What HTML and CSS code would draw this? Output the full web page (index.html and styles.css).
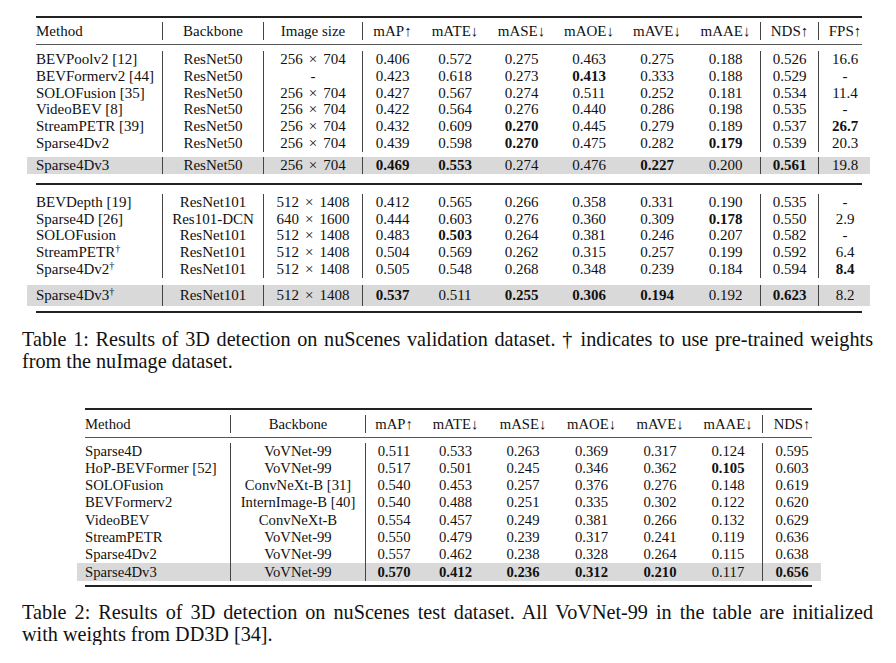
FILE: index.html
```html
<!DOCTYPE html>
<html lang="en">
<head>
<meta charset="utf-8">
<title>Sparse4Dv3 results</title>
<link rel="stylesheet" href="styles.css">
</head>
<body>
<div class="page">
  <div class="tbl t1">
    <div class="rule heavy first"></div>
    <div class="row head">
      <div class="cell left bar">Method</div>
      <div class="cell bar">Backbone</div>
      <div class="cell bar">Image size</div>
      <div class="cell">mAP↑</div>
      <div class="cell">mATE↓</div>
      <div class="cell">mASE↓</div>
      <div class="cell">mAOE↓</div>
      <div class="cell">mAVE↓</div>
      <div class="cell bar">mAAE↓</div>
      <div class="cell bar">NDS↑</div>
      <div class="cell last">FPS↑</div>
    </div>
    <div class="rule light"></div>
    <div class="block b1">
      <div class="row">
        <div class="cell left bar">BEVPoolv2 [12]</div><div class="cell bar">ResNet50</div><div class="cell bar">256<span class="x">×</span>704</div>
        <div class="cell">0.406</div><div class="cell">0.572</div><div class="cell">0.275</div><div class="cell">0.463</div><div class="cell">0.275</div><div class="cell bar">0.188</div><div class="cell bar">0.526</div><div class="cell last">16.6</div>
      </div>
      <div class="row">
        <div class="cell left bar">BEVFormerv2 [44]</div><div class="cell bar">ResNet50</div><div class="cell bar">-</div>
        <div class="cell">0.423</div><div class="cell">0.618</div><div class="cell">0.273</div><div class="cell"><b>0.413</b></div><div class="cell">0.333</div><div class="cell bar">0.188</div><div class="cell bar">0.529</div><div class="cell last">-</div>
      </div>
      <div class="row">
        <div class="cell left bar">SOLOFusion [35]</div><div class="cell bar">ResNet50</div><div class="cell bar">256<span class="x">×</span>704</div>
        <div class="cell">0.427</div><div class="cell">0.567</div><div class="cell">0.274</div><div class="cell">0.511</div><div class="cell">0.252</div><div class="cell bar">0.181</div><div class="cell bar">0.534</div><div class="cell last">11.4</div>
      </div>
      <div class="row">
        <div class="cell left bar">VideoBEV [8]</div><div class="cell bar">ResNet50</div><div class="cell bar">256<span class="x">×</span>704</div>
        <div class="cell">0.422</div><div class="cell">0.564</div><div class="cell">0.276</div><div class="cell">0.440</div><div class="cell">0.286</div><div class="cell bar">0.198</div><div class="cell bar">0.535</div><div class="cell last">-</div>
      </div>
      <div class="row">
        <div class="cell left bar">StreamPETR [39]</div><div class="cell bar">ResNet50</div><div class="cell bar">256<span class="x">×</span>704</div>
        <div class="cell">0.432</div><div class="cell">0.609</div><div class="cell"><b>0.270</b></div><div class="cell">0.445</div><div class="cell">0.279</div><div class="cell bar">0.189</div><div class="cell bar">0.537</div><div class="cell last"><b>26.7</b></div>
      </div>
      <div class="row">
        <div class="cell left bar">Sparse4Dv2</div><div class="cell bar">ResNet50</div><div class="cell bar">256<span class="x">×</span>704</div>
        <div class="cell">0.439</div><div class="cell">0.598</div><div class="cell"><b>0.270</b></div><div class="cell">0.475</div><div class="cell">0.282</div><div class="cell bar"><b>0.179</b></div><div class="cell bar">0.539</div><div class="cell last">20.3</div>
      </div>
    </div>
    <div class="row hl hl1">
      <div class="cell left bar">Sparse4Dv3</div><div class="cell bar">ResNet50</div><div class="cell bar">256<span class="x">×</span>704</div>
      <div class="cell"><b>0.469</b></div><div class="cell"><b>0.553</b></div><div class="cell">0.274</div><div class="cell">0.476</div><div class="cell"><b>0.227</b></div><div class="cell bar">0.200</div><div class="cell bar"><b>0.561</b></div><div class="cell last">19.8</div>
    </div>
    <div class="rule heavy sep"></div>
    <div class="block b2">
      <div class="row">
        <div class="cell left bar">BEVDepth [19]</div><div class="cell bar">ResNet101</div><div class="cell bar">512<span class="x">×</span>1408</div>
        <div class="cell">0.412</div><div class="cell">0.565</div><div class="cell">0.266</div><div class="cell">0.358</div><div class="cell">0.331</div><div class="cell bar">0.190</div><div class="cell bar">0.535</div><div class="cell last">-</div>
      </div>
      <div class="row">
        <div class="cell left bar">Sparse4D [26]</div><div class="cell bar">Res101-DCN</div><div class="cell bar">640<span class="x">×</span>1600</div>
        <div class="cell">0.444</div><div class="cell">0.603</div><div class="cell">0.276</div><div class="cell">0.360</div><div class="cell">0.309</div><div class="cell bar"><b>0.178</b></div><div class="cell bar">0.550</div><div class="cell last">2.9</div>
      </div>
      <div class="row">
        <div class="cell left bar">SOLOFusion</div><div class="cell bar">ResNet101</div><div class="cell bar">512<span class="x">×</span>1408</div>
        <div class="cell">0.483</div><div class="cell"><b>0.503</b></div><div class="cell">0.264</div><div class="cell">0.381</div><div class="cell">0.246</div><div class="cell bar">0.207</div><div class="cell bar">0.582</div><div class="cell last">-</div>
      </div>
      <div class="row">
        <div class="cell left bar">StreamPETR<sup>†</sup></div><div class="cell bar">ResNet101</div><div class="cell bar">512<span class="x">×</span>1408</div>
        <div class="cell">0.504</div><div class="cell">0.569</div><div class="cell">0.262</div><div class="cell">0.315</div><div class="cell">0.257</div><div class="cell bar">0.199</div><div class="cell bar">0.592</div><div class="cell last">6.4</div>
      </div>
      <div class="row">
        <div class="cell left bar">Sparse4Dv2<sup>†</sup></div><div class="cell bar">ResNet101</div><div class="cell bar">512<span class="x">×</span>1408</div>
        <div class="cell">0.505</div><div class="cell">0.548</div><div class="cell">0.268</div><div class="cell">0.348</div><div class="cell">0.239</div><div class="cell bar">0.184</div><div class="cell bar">0.594</div><div class="cell last"><b>8.4</b></div>
      </div>
    </div>
    <div class="row hl hl2">
      <div class="cell left bar">Sparse4Dv3<sup>†</sup></div><div class="cell bar">ResNet101</div><div class="cell bar">512<span class="x">×</span>1408</div>
      <div class="cell"><b>0.537</b></div><div class="cell">0.511</div><div class="cell"><b>0.255</b></div><div class="cell"><b>0.306</b></div><div class="cell"><b>0.194</b></div><div class="cell bar">0.192</div><div class="cell bar"><b>0.623</b></div><div class="cell last">8.2</div>
    </div>
    <div class="rule heavy end"></div>
  </div>

  <p class="caption cap1"><span class="full">Table 1: Results of 3D detection on nuScenes validation dataset. † indicates to use pre-trained weights</span><span class="tail">from the nuImage dataset.</span></p>

  <div class="tbl t2">
    <div class="rule heavy first"></div>
    <div class="row head">
      <div class="cell left bar">Method</div>
      <div class="cell bar">Backbone</div>
      <div class="cell">mAP↑</div>
      <div class="cell">mATE↓</div>
      <div class="cell">mASE↓</div>
      <div class="cell">mAOE↓</div>
      <div class="cell">mAVE↓</div>
      <div class="cell bar">mAAE↓</div>
      <div class="cell last">NDS↑</div>
    </div>
    <div class="rule light"></div>
    <div class="block">
      <div class="row">
        <div class="cell left bar">Sparse4D</div><div class="cell bar">VoVNet-99</div>
        <div class="cell">0.511</div><div class="cell">0.533</div><div class="cell">0.263</div><div class="cell">0.369</div><div class="cell">0.317</div><div class="cell bar">0.124</div><div class="cell last">0.595</div>
      </div>
      <div class="row">
        <div class="cell left bar">HoP-BEVFormer [52]</div><div class="cell bar">VoVNet-99</div>
        <div class="cell">0.517</div><div class="cell">0.501</div><div class="cell">0.245</div><div class="cell">0.346</div><div class="cell">0.362</div><div class="cell bar"><b>0.105</b></div><div class="cell last">0.603</div>
      </div>
      <div class="row">
        <div class="cell left bar">SOLOFusion</div><div class="cell bar">ConvNeXt-B [31]</div>
        <div class="cell">0.540</div><div class="cell">0.453</div><div class="cell">0.257</div><div class="cell">0.376</div><div class="cell">0.276</div><div class="cell bar">0.148</div><div class="cell last">0.619</div>
      </div>
      <div class="row">
        <div class="cell left bar">BEVFormerv2</div><div class="cell bar">InternImage-B [40]</div>
        <div class="cell">0.540</div><div class="cell">0.488</div><div class="cell">0.251</div><div class="cell">0.335</div><div class="cell">0.302</div><div class="cell bar">0.122</div><div class="cell last">0.620</div>
      </div>
      <div class="row">
        <div class="cell left bar">VideoBEV</div><div class="cell bar">ConvNeXt-B</div>
        <div class="cell">0.554</div><div class="cell">0.457</div><div class="cell">0.249</div><div class="cell">0.381</div><div class="cell">0.266</div><div class="cell bar">0.132</div><div class="cell last">0.629</div>
      </div>
      <div class="row">
        <div class="cell left bar">StreamPETR</div><div class="cell bar">VoVNet-99</div>
        <div class="cell">0.550</div><div class="cell">0.479</div><div class="cell">0.239</div><div class="cell">0.317</div><div class="cell">0.241</div><div class="cell bar">0.119</div><div class="cell last">0.636</div>
      </div>
      <div class="row">
        <div class="cell left bar">Sparse4Dv2</div><div class="cell bar">VoVNet-99</div>
        <div class="cell">0.557</div><div class="cell">0.462</div><div class="cell">0.238</div><div class="cell">0.328</div><div class="cell">0.264</div><div class="cell bar">0.115</div><div class="cell last">0.638</div>
      </div>
      <div class="row hl">
        <div class="cell left bar">Sparse4Dv3</div><div class="cell bar">VoVNet-99</div>
        <div class="cell"><b>0.570</b></div><div class="cell"><b>0.412</b></div><div class="cell"><b>0.236</b></div><div class="cell"><b>0.312</b></div><div class="cell"><b>0.210</b></div><div class="cell bar">0.117</div><div class="cell last"><b>0.656</b></div>
      </div>
    </div>
    <div class="rule heavy end"></div>
  </div>

  <p class="caption cap2"><span class="full">Table 2: Results of 3D detection on nuScenes test dataset. All VoVNet-99 in the table are initialized</span><span class="tail">with weights from DD3D [34].</span></p>
</div>
</body>
</html>
```

FILE: styles.css
```css
html, body {
  margin: 0;
  padding: 0;
  background: #ffffff;
}

.page {
  width: 896px;
  font-family: "Liberation Serif", "Times New Roman", serif;
  color: #111111;
  padding-top: 16px;
}

.tbl {
  display: flex;
  flex-direction: column;
}

.t1 {
  margin-left: 36px;
  width: 826px;
  font-size: 15px;
}

.t2 {
  margin-top: 36px;
  margin-left: 85px;
  width: 727px;
  font-size: 14.7px;
}

.rule {
  background: #222222;
}

.rule.heavy {
  height: 2px;
}

.rule.light {
  height: 1px;
  background: #555555;
}

.row {
  display: grid;
  height: 16.8px;
  line-height: 16.8px;
}

.t1 .row {
  grid-template-columns: 127px 101px 99px 59px 66px 67px 68px 68px 70px 58px 43px;
}

.t2 .row {
  grid-template-columns: 146px 135px 56px 67px 68px 69px 68px 69px 49px;
  height: 17.2px;
  line-height: 17.2px;
}

.cell {
  text-align: center;
  white-space: nowrap;
  box-sizing: border-box;
}

.cell.left {
  text-align: left;
}

.cell.last {
  padding-left: 9px;
}

.cell.bar {
  border-right: 1px solid #444444;
}

.cell b {
  font-weight: bold;
}

.x {
  padding: 0 6px;
}

sup {
  font-size: 0.68em;
  line-height: 0;
  vertical-align: 0.5em;
}

/* table 1 vertical rhythm */
.t1 .head {
  margin-top: 4px;
  height: 18px;
  line-height: 18px;
}

.t1 .rule.light {
  margin-top: 4px;
}

.t1 .b1 {
  margin-top: 6px;
}

.hl {
  background: #d9d9d9;
}

.t1 .hl {
  margin-left: -9px;
  margin-right: -8px;
  padding-left: 9px;
  padding-right: 8px;
}

.t1 .hl1 {
  margin-top: 5px;
  height: 17px;
  line-height: 17px;
}

.t1 .rule.sep {
  margin-top: 9px;
}

.t1 .b2 {
  margin-top: 9px;
}

.t1 .hl2 {
  margin-top: 7px;
  height: 21px;
  line-height: 21px;
}

.t1 .rule.end {
  margin-top: 5px;
}

/* table 2 vertical rhythm */
.t2 .head {
  margin-top: 5px;
  height: 18px;
  line-height: 18px;
}

.t2 .rule.light {
  margin-top: 4px;
}

.t2 .block {
  margin-top: 5px;
}

.t2 .hl {
  margin-left: -8px;
  margin-right: -9px;
  padding-left: 8px;
  padding-right: 9px;
  height: 18px;
  line-height: 18px;
}

.t2 .rule.end {
  margin-top: 4px;
}

/* captions */
.caption {
  margin: 0;
  margin-left: 22px;
  width: 851px;
  font-size: 20.2px;
  line-height: 22px;
  color: #111111;
}

.caption .full {
  display: block;
  text-align: justify;
  text-align-last: justify;
  white-space: nowrap;
}

.caption .tail {
  display: block;
}

.cap1 {
  margin-top: 15px;
}

.cap2 {
  margin-top: 14px;
}
```
